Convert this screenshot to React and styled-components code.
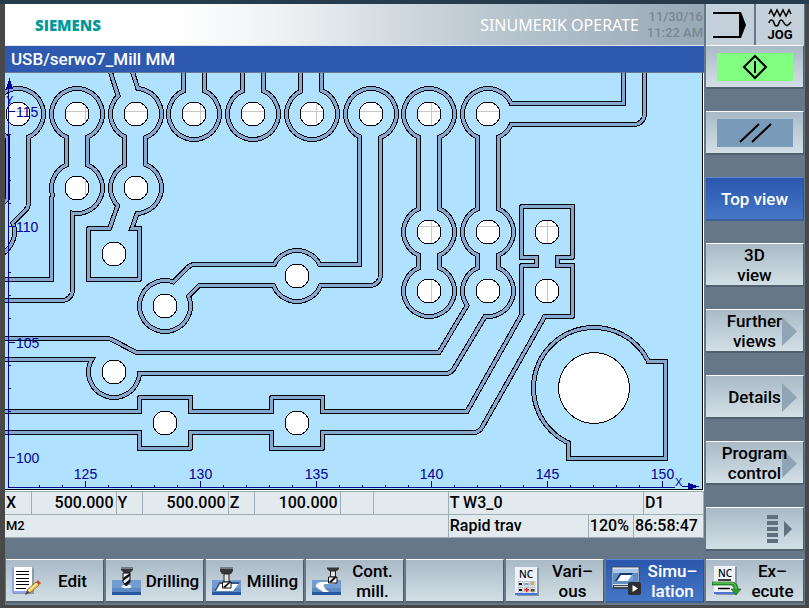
import React from "react";
import styled, { createGlobalStyle, css } from "styled-components";

const sans = 'Roboto, "Liberation Sans", sans-serif';

const GlobalStyle = createGlobalStyle`
  *, *::before, *::after { box-sizing: border-box; }
  body { margin: 0; background: #484848; }
`;

const Screen = styled.main`
  min-height: 100vh;
  padding: 0 4px 0 5px;
  background: #484848;
  border-top: 4px solid #263b4b;
  font-family: ${sans};
  font-weight: 500;
  color: #000;
`;

const Panel = styled.div`
  background: #667887;
`;

const Upper = styled.div`
  display: grid;
  grid-template-columns: minmax(0, 1fr) 99px;
  column-gap: 2px;
`;

const Work = styled.section`
  min-width: 0;
`;

const Header = styled.header`
  display: flex;
  align-items: center;
  height: 41px;
  padding: 0 1px 0 30px;
  background: linear-gradient(90deg, #fff 0 24%, #eef1f3 40%, #b9c6cf 70%, #97a9b6 100%);
`;

const Brand = styled.span`
  flex: 1;
  font-family: "Open Sans", "Noto Sans", sans-serif;
  font-size: 15px;
  font-weight: 800;
  line-height: 20px;
  color: #009999;
`;

const Product = styled.span`
  font-family: "Noto Sans", "Open Sans", sans-serif;
  font-size: 16px;
  font-weight: 400;
  color: #fff;
  white-space: nowrap;
`;

const Clock = styled.time`
  width: 64px;
  text-align: right;
  font-size: 13px;
  line-height: 16px;
  color: #7b8791;
  white-space: nowrap;
`;

const Title = styled.h1`
  margin: 0;
  height: 28px;
  padding-left: 6px;
  border-top: 1px solid #dfe6ee;
  border-bottom: 1px solid #66798c;
  background: #2d59af;
  color: #fff;
  font-size: 17px;
  font-weight: 500;
  line-height: 26px;
`;

const PlotFrame = styled.div`
  border-right: 1px solid #fff;
  border-bottom: 1px solid #fff;
`;

const PlotSvg = styled.svg`
  display: block;
  width: 100%;
  height: auto;
  background: #b0e2ff;
  border-right: 1px solid #000;
  border-bottom: 1px solid #000;
`;

const AxisLabel = styled.text`
  font-family: "Liberation Sans", sans-serif;
  font-size: ${(p) => (p.$small ? "11px" : "14px")};
  font-weight: 400;
  fill: #00009a;
`;

const Readout = styled.table`
  width: 100%;
  table-layout: fixed;
  border-collapse: collapse;
  background: #e3eaed;
  font-size: 16px;
  line-height: 22px;
`;

const Cell = styled.td`
  height: 23px;
  padding: 0 2px 0 1px;
  border: 1px solid #9aafb9;
  border-left-width: ${(p) => (p.$first ? "0" : "1px")};
  text-align: ${(p) => (p.$num ? "right" : "left")};
  white-space: nowrap;
  ${(p) => p.$small && css`
    font-size: 13px;
  `}
`;

const Side = styled.aside`
  display: flex;
  flex-direction: column;
  padding-right: 1px;
`;

const Status = styled.div`
  display: grid;
  grid-template-columns: 1fr 1fr;
  gap: 2px;
  height: 41px;
`;

const StatusCell = styled.div`
  display: grid;
  place-items: center;
  background: #c5d1da;
`;

const SideKeys = styled.nav`
  display: flex;
  flex-direction: column;
  gap: 22px;
`;

const Key = styled.button`
  display: flex;
  align-items: center;
  width: 100%;
  height: 44px;
  margin: 0;
  padding: 0;
  border: solid;
  border-width: 1px 1px 2px 0;
  border-color: #fff #4d5c68 #52616d #fff;
  background: linear-gradient(#a9bac6, #d3dfe6);
  color: #000;
  font-family: inherit;
  font-size: 17px;
  font-weight: 500;
  line-height: 20px;
  text-align: center;
  cursor: pointer;
  ${(p) => p.$active && css`
    border-color: #5d86cd #3b4f78 #3b5e9c #5d86cd;
    background: linear-gradient(#2a57ad, #4576c6);
    color: #fff;
  `}
`;

const SideKey = styled(Key)`
  position: relative;
  justify-content: center;
`;

const KeyText = styled.span`
  position: relative;
  flex: 1;
  white-space: pre-line;
`;

const Swatch = styled.span`
  display: grid;
  place-items: center;
  width: 76px;
  height: 28px;
  background: ${(p) => p.$color};
`;

const MoreMark = styled.svg`
  position: absolute;
  right: 6px;
  top: 7px;
`;

const PageMark = styled.svg`
  margin-left: 50px;
`;

const BottomKeys = styled.nav`
  display: grid;
  grid-template-columns: repeat(8, minmax(0, 1fr));
  gap: 2px;
  padding: 0 1px 2px;
  margin-top: 8px;
`;

const SoftKey = styled(Key)`
  padding-left: 6px;
`;

const Glyph = styled.svg`
  flex: none;
`;

const NcText = styled.text`
  font-family: "Noto Sans", sans-serif;
  font-size: 10px;
  font-weight: 500;
`;

const JogText = styled.text`
  font-family: ${sans};
  font-size: 13px;
  font-weight: 700;
`;

/* ---- simulated board ---- */

const pads = [
  [18, 114], [77, 114], [136, 114], [194, 114], [253, 114],
  [312, 114], [371, 114], [429, 114], [488, 114],
  [77, 188], [136, 188], [429, 232], [488, 232],
  [429, 291], [488, 291], [297, 276], [165, 306], [114, 372],
];
const squarePads = [
  [114, 254], [165, 423], [297, 423], [547, 232], [547, 291],
];
const traces = [
  "M18 114V203L-11 232",
  "M77 114V188L62 200V290H-10",
  "M114 49L135 114V188L112 253",
  "M194 114V60M253 114V60M311 114V60",
  "M370 114V275H195L165 305",
  "M429 114V291",
  "M488 114H634V60M488 114V291L445 363H134L107 349H-10",
  "M547 232V291L473 422H-10",
];
const layers = [
  { fill: "#000", pad: 28, trace: 26, inset: 0 },
  { fill: "#84a8d0", pad: 27, trace: 24, inset: 1 },
  { fill: "#000", pad: 24, trace: 18, inset: 4 },
  { fill: "#b0e2ff", pad: 23, trace: 16, inset: 5 },
];
const gridX = [85.5, 200.5, 316.5, 431.5, 547.5, 662.5];
const gridY = [111.5, 226.5, 342.5, 457.5];
const minors = [1, 2, 3, 4];

function Layer({ fill, pad, trace, inset }) {
  return (
    <g fill={fill}>
      {traces.map((d) => (
        <path key={d} d={d} fill="none" stroke={fill} strokeWidth={trace} strokeLinejoin="round" />
      ))}
      {pads.map(([x, y]) => <circle key={`${x} ${y}`} cx={x} cy={y} r={pad} />)}
      <circle cx="-11" cy="232" r={pad} />
      {squarePads.map(([x, y]) => (
        <rect key={`${x} ${y}`} x={x - pad} y={y - pad} width={pad * 2} height={pad * 2} rx={inset < 2 ? 2 : 0} />
      ))}
      <circle cx="594" cy="388" r={63 - inset} />
      <rect x={566 + inset} y={359 + inset} width={102 - inset * 2} height={102 - inset * 2} rx={inset < 2 ? 1 : 0} />
    </g>
  );
}

function Holes({ items = [...pads, ...squarePads], ...props }) {
  return (
    <g {...props}>
      {items.map(([x, y]) => <circle key={`${x} ${y}`} cx={x} cy={y} r="12" />)}
      <circle cx="594" cy="388" r="35.5" />
    </g>
  );
}

function Plot() {
  return (
    <PlotFrame>
      <PlotSvg viewBox="5 73 697 416" shapeRendering="crispEdges" role="img" aria-label="Top view of the workpiece">
        {layers.map((l) => <Layer key={l.inset} {...l} />)}
        <Holes fill="#fff" />
        <clipPath id="drilled">
          {[...pads, ...squarePads].map(([x, y]) => <circle key={`${x} ${y}`} cx={x} cy={y} r="12" />)}
        </clipPath>
        <g clipPath="url(#drilled)" stroke="#c8c8c8">
          {gridX.map((x) => <path key={x} d={`M${x} 73V489`} />)}
          {gridY.map((y) => <path key={y} d={`M5 ${y}H702`} />)}
        </g>
        <Holes fill="none" stroke="#000" />
        <g stroke="#00009a" fill="none">
          <path d="M8.5 85V487.5H675M682 486.500H690" />
          {gridX.map((x) => <path key={x} d={`M${x} 481V487`} />)}
          {gridY.map((y) => <path key={y} d={`M9 ${y}H15`} />)}
          {[-30, ...gridX.slice(0, 5)].map((x) => minors.map((m) => (
            x + m * 23 > 20 && <path key={x + m} d={`M${x + m * 23} 485V487`} />
          )))}
          {gridY.map((y) => minors.map((m) => (
            y + m * 23 < 470 && <path key={y + m} d={`M9 ${y + m * 23}H11`} />
          )))}
        </g>
        <path d="M9.5 78L13 89H6ZM699 486.500L688 483V490Z" fill="#00009a" />
        <AxisLabel $small x="6" y="104">Y</AxisLabel>
        <AxisLabel $small x="675" y="486">X</AxisLabel>
        {gridY.map((y, i) => <AxisLabel key={y} x="16" y={y + 5}>{115 - i * 5}</AxisLabel>)}
        {gridX.map((x, i) => <AxisLabel key={x} x={x} y="479" textAnchor="middle">{125 + i * 5}</AxisLabel>)}
      </PlotSvg>
    </PlotFrame>
  );
}

/* ---- soft key drawings ---- */

const icon = { width: 30, height: 30, viewBox: "0 0 30 30", "aria-hidden": true };

const EditIcon = () => (
  <Glyph {...icon}>
    <path d="M1 1H20L22 3V28H1Z" fill="#8e9ba6" />
    <path d="M0 1H20V27H0Z" fill="#fff" />
    <path d="M0 1H2V27H0ZM0 25H20V27H0Z" fill="#8ea4ee" />
    <path d="M4 5.500H17M4 8.500H17M4 12.500H17M4 15.500H17M4 18.500H17M4 22.500H14" stroke="#000" />
    <path d="M13 29L15 24L18 27Z" fill="#4b4b55" />
    <path d="M15 24L24 16L27 19L18 27Z" fill="#f4c542" stroke="#8a6318" strokeWidth=".8" />
    <path d="M16 24.500L25 16.500L26 17.500L17 25.500Z" fill="#fff0a8" />
    <path d="M24 16L26 14L29 17L27 19Z" fill="#d14a35" />
  </Glyph>
);

const Block = () => (
  <>
    <path d="M0 14H29V26H0Z" fill="#729cd0" />
    <path d="M0 22H29V26H0Z" fill="#5c88c4" />
    <path d="M0 26H29V29H0Z" fill="#2858a2" />
  </>
);

const DrillIcon = () => (
  <Glyph {...icon}>
    <Block />
    <ellipse cx="14.500" cy="20.500" rx="5" ry="1.800" fill="#e6f3ff" />
    <path d="M9 1H21V4L18 7H12L9 4Z" fill="#35373b" />
    <path d="M9 1H21V3H9Z" fill="#777c82" />
    <path d="M11 7H18V16L14.500 20L11 16Z" fill="#eceff1" stroke="#111" />
    <path d="M11 12L18 7V10L11 15ZM12 18L18 13V16L14 20Z" fill="#111" />
  </Glyph>
);

const MillIcon = () => (
  <Glyph {...icon}>
    <Block />
    <path d="M2 25L7 16H28L21 25Z" fill="#fff" />
    <path d="M7 16H28L27 18H8L4 25H2Z" fill="#34588f" />
    <path d="M8 1H21V5L19 8H10L8 5Z" fill="#35373b" />
    <path d="M8 1H21V3H8Z" fill="#777c82" />
    <path d="M12 8H17V16H12Z" fill="#dfe3e6" stroke="#222" />
    <path d="M10.500 16H19V22H10.500Z" fill="#fff" stroke="#111" />
    <path d="M11 21L17 16H19L13 22Z" fill="#111" />
  </Glyph>
);

const ContourIcon = () => (
  <Glyph {...icon}>
    <Block />
    <path d="M4 19Q6 16 10 16H26L21 18H13C10 19 12 22 17 26H11C8 23 3 22 4 19Z" fill="#fff" />
    <path d="M15 1H27V3L25 5H17L15 3Z" fill="#35373b" />
    <path d="M15 1H27V2H15Z" fill="#777c82" />
    <path d="M18.500 5H23.500V11H18.500Z" fill="#dfe3e6" stroke="#222" />
    <path d="M16.500 11H25V17H16.500Z" fill="#fff" stroke="#111" />
    <path d="M17 16L22 11H25L19 17Z" fill="#111" />
  </Glyph>
);

const VariousIcon = () => (
  <Glyph {...icon}>
    <path d="M5 2H27V30H5Z" fill="#8797aa" />
    <path d="M3 1H25V29H3Z" fill="#edf2fb" />
    <path d="M3 27H25V29H3Z" fill="#4f73d0" />
    <NcText x="7" y="12">NC</NcText>
    <g fill="#fff" stroke="#9aa3ad" strokeWidth=".7">
      <path d="M6.500 15.500H11V20H6.500ZM12.500 15.500H17V20H12.500ZM18.500 15.500H23V20H18.500ZM6.500 21.500H11V26H6.500ZM12.500 21.500H17V26H12.500ZM18.500 21.500H23V26H18.500Z" />
    </g>
    <path d="M7 17H10V19H7ZM7 23H10V25H7Z" fill="#111" />
    <path d="M13 17H16.500V19H13Z" fill="#6f9fdb" />
    <path d="M19 16H22V19H19Z" fill="#d4b230" />
    <path d="M14 22H15.500V23H17V24.500H15.500V26H14V24.500H12.500V23H14Z" fill="#e01818" />
    <path d="M19 23H22.500V25.500H19Z" fill="#4d4714" />
  </Glyph>
);

const SimulationIcon = () => (
  <Glyph {...icon}>
    <path d="M0 1H27V22H0Z" fill="#dce6ee" stroke="#33435a" strokeWidth=".8" />
    <path d="M1 3H26V18H1Z" fill="#5d8fca" />
    <path d="M1 3H26V7H1Z" fill="#a8c6e6" />
    <path d="M3 15L8 7H21L16 15Z" fill="#17386d" />
    <path d="M5 15L9 9H20L16 15Z" fill="#fff" />
    <path d="M16 15L21 8V13L19 15Z" fill="#79a6d9" />
    <path d="M1 19H26V23H1Z" fill="#3b4653" />
    <path d="M2 20H17V21H2Z" fill="#c8d3dc" />
    <rect x="16" y="16" width="13" height="13" rx="2" fill="#2d2f34" />
    <path d="M20.500 19L26 22.500L20.500 26Z" fill="#fff" />
  </Glyph>
);

const ExecuteIcon = () => (
  <Glyph {...icon}>
    <path d="M4 1H25V29H4Z" fill="#8797aa" />
    <path d="M2 0H23V28H2Z" fill="#edf2fb" />
    <path d="M2 26H23V28H2Z" fill="#4f73d0" />
    <NcText x="6" y="11">NC</NcText>
    <path d="M6 14H19M6 22.500H18" stroke="#000" strokeWidth="1.500" />
    <path d="M0 16H19C24 16 26 19 26 23H29L24 29L19 23H22C22 20 20 19 18 19H0Z" fill="#2d962d" stroke="#176d17" strokeWidth=".7" />
    <path d="M1 17H19C22 17 24 19 24 23" stroke="#76d370" fill="none" />
  </Glyph>
);

const softKeys = [
  { label: "Edit", Icon: EditIcon },
  { label: "Drilling", Icon: DrillIcon },
  { label: "Milling", Icon: MillIcon },
  { label: "Cont.\nmill.", Icon: ContourIcon },
  { label: "" },
  { label: "Vari–\nous", Icon: VariousIcon },
  { label: "Simu–\nlation", Icon: SimulationIcon, active: true },
  { label: "Ex–\necute", Icon: ExecuteIcon },
];

const viewKeys = [
  { label: "Top view", active: true },
  { label: "3D\nview" },
  { label: "Further\nviews", more: true },
  { label: "Details", more: true },
  { label: "Program\ncontrol", more: true },
];

const columns = [26, 85, 26, 86, 26, 86, 33, 75, 140, 45, 10, 60];

function Position() {
  return (
    <Readout>
      <colgroup>
        {columns.map((w, i) => <col key={i} width={`${(w / 698) * 100}%`} />)}
      </colgroup>
      <tbody>
        <tr>
          <Cell $first>X</Cell><Cell $num>500.000</Cell>
          <Cell>Y</Cell><Cell $num>500.000</Cell>
          <Cell>Z</Cell><Cell $num>100.000</Cell>
          <Cell /><Cell />
          <Cell colSpan={3}>T W3_0</Cell><Cell>D1</Cell>
        </tr>
        <tr>
          <Cell $first $small colSpan={8}>M2</Cell>
          <Cell>Rapid trav</Cell><Cell>120%</Cell><Cell colSpan={2}>86:58:47</Cell>
        </tr>
      </tbody>
    </Readout>
  );
}

export default function App() {
  return (
    <>
      <GlobalStyle />
      <Screen>
        <Panel>
          <Upper>
            <Work>
              <Header>
                <Brand>SIEMENS</Brand>
                <Product>SINUMERIK OPERATE</Product>
                <Clock>11/30/16<br />11:22 AM</Clock>
              </Header>
              <Title>USB/serwo7_Mill MM</Title>
              <Plot />
              <Position />
            </Work>
            <Side>
              <Status>
                <StatusCell>
                  <svg width="36" height="28" viewBox="0 0 36 28" role="img" aria-label="Channel">
                    <path d="M1 2H28V26H1" fill="none" stroke="#000" strokeWidth="2" />
                    <path d="M27 1H29L34 14L29 27H27Z" />
                  </svg>
                </StatusCell>
                <StatusCell>
                  <svg width="36" height="34" viewBox="0 0 36 34" role="img" aria-label="JOG">
                    <g fill="none" stroke="#000" strokeWidth="1.500">
                      <path d="M7 6L9 2L12 8L15 2L18 8L21 2L24 8L27 2L29 6" />
                      <path d="M7 15C8 11 11 11 12 15S16 19 17 15S20 11 22 15S26 18 29 14" />
                    </g>
                    <JogText x="18" y="31" textAnchor="middle">JOG</JogText>
                  </svg>
                </StatusCell>
              </Status>
              <SideKeys aria-label="Views">
                <SideKey aria-label="Cycle start">
                  <Swatch $color="#80ff80">
                    <svg width="26" height="26" viewBox="0 0 26 26" aria-hidden="true">
                      <path d="M13 2L24 13L13 24L2 13ZM13 7V19" fill="none" stroke="#000" strokeWidth="2" />
                    </svg>
                  </Swatch>
                </SideKey>
                <SideKey aria-label="Reset">
                  <Swatch $color="#7a9aba">
                    <svg width="34" height="22" viewBox="0 0 34 22" aria-hidden="true">
                      <path d="M2 20L21 2M14 20L33 2" stroke="#000" strokeWidth="2" />
                    </svg>
                  </Swatch>
                </SideKey>
                {viewKeys.map(({ label, active, more }) => (
                  <SideKey key={label} $active={active}>
                    {more && (
                      <MoreMark width="15" height="29" viewBox="0 0 15 29" aria-hidden="true">
                        <path d="M0 0L15 14.500L0 29Z" fill="#8fa4b4" />
                      </MoreMark>
                    )}
                    <KeyText>{label}</KeyText>
                  </SideKey>
                ))}
                <SideKey aria-label="More keys">
                  <PageMark width="26" height="28" viewBox="0 0 26 28" aria-hidden="true">
                    <path d="M0 0H11V4H0ZM0 6H11V10H0ZM0 12H11V16H0ZM0 18H11V22H0ZM0 24H11V28H0ZM17 6L25 14L17 22Z" fill="#5f7080" />
                  </PageMark>
                </SideKey>
              </SideKeys>
            </Side>
          </Upper>
          <BottomKeys aria-label="Operating areas">
            {softKeys.map(({ label, Icon, active }, i) => (
              <SoftKey key={i} $active={active} aria-label={label ? undefined : "Unassigned"}>
                {Icon && <Icon />}
                <KeyText>{label}</KeyText>
              </SoftKey>
            ))}
          </BottomKeys>
        </Panel>
      </Screen>
    </>
  );
}
